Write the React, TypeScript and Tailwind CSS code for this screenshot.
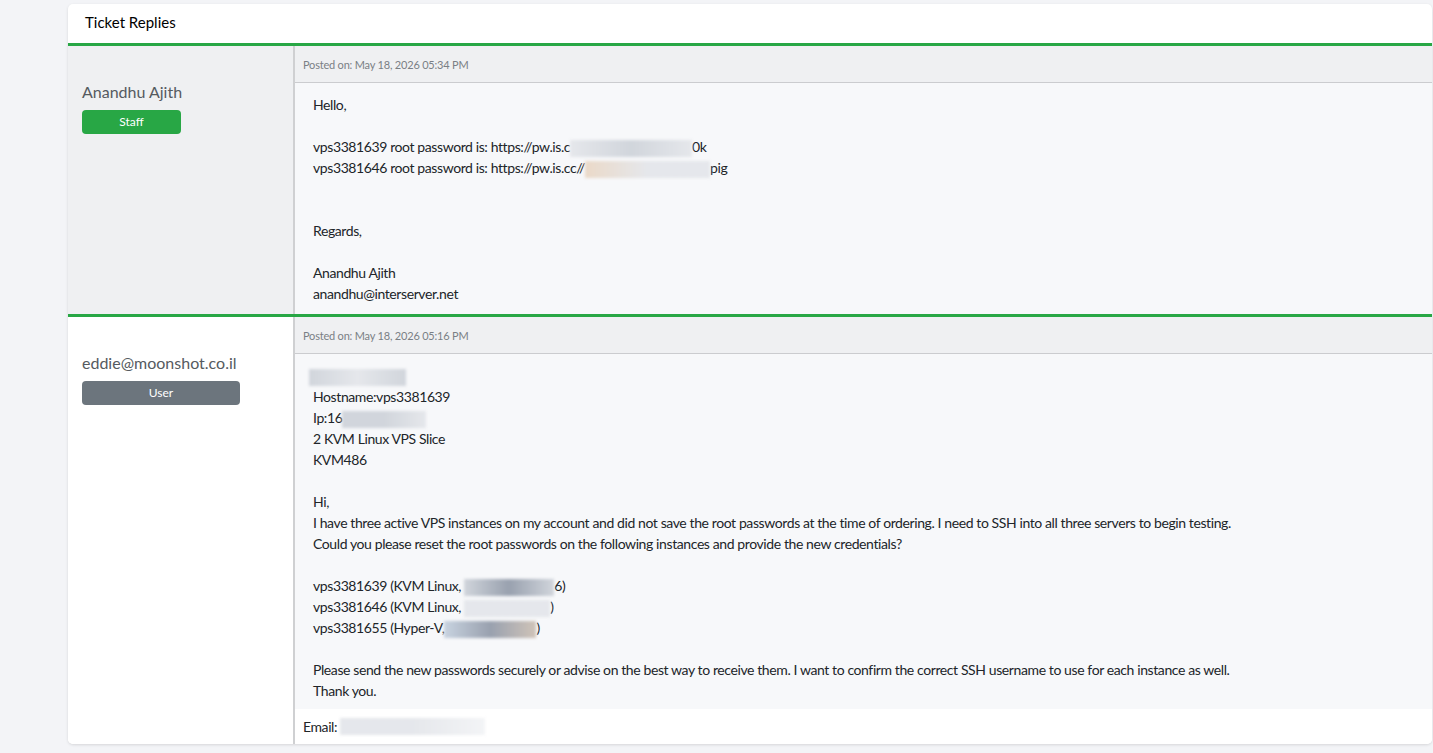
import type { ReactNode } from "react";

const font = { fontFamily: "Lato, 'Noto Sans', sans-serif" };

function Hidden({ w, tint = "" }: { w: number; tint?: string }) {
    // redacted bit of text
    return (
        <span
            className={`inline-block align-middle h-[17px] -my-1 blur-[1.5px] bg-gradient-to-r ${tint || "from-gray-200 via-gray-300 to-gray-200"}`}
            style={{ width: w }}
        />
    );
}

function Badge({ label, tone, width }: { label: string; tone: string; width: string }) {
    return (
        <div className={`mt-[8px] h-[24px] rounded-[4px] flex items-center justify-center text-[12px] text-white ${tone} ${width}`}>
            {label}
        </div>
    );
}

function Reply({
    name,
    badge,
    posted,
    side,
    pad,
    children,
    footer,
}: {
    name: string;
    badge: ReactNode;
    posted: string;
    side: string;
    pad: string;
    children: ReactNode;
    footer?: ReactNode;
}) {
    return (
        <div className="flex border-t-[3px] border-[#28a745]">
            <div className={`w-[225px] shrink-0 pl-[14px] pt-[36px] ${side}`}>
                <div className="text-[16px] leading-5 text-[#555a60]">{name}</div>
                {badge}
            </div>
            <div className="flex-1 border-l-2 border-[#cfd0d2] flex flex-col">
                <div className="h-[37px] bg-[#eff0f2] border-b border-[#cbcccf] pl-[8px] pt-[2px] flex items-center text-[11px] tracking-[-0.2px] text-[#7a7f85]">
                    Posted on: {posted}
                </div>
                <div className={`flex-1 bg-[#f7f8fa] pl-[18px] text-[14px] leading-[21px] tracking-[-0.4px] text-[#212529] ${pad}`}>
                    {children}
                </div>
                {footer}
            </div>
        </div>
    );
}

export default function App() {
    return (
        <div className="min-h-[753px] bg-[#f3f4f7] pt-[4px] pl-[68px] pr-px" style={font}>
            <div className="bg-white rounded-[5px] shadow-[0_1px_3px_rgba(0,0,0,0.12)] overflow-hidden">
                <div className="h-[39px] pl-[17px] pb-[2px] flex items-center text-[15px] text-black">Ticket Replies</div>

                <Reply
                    name="Anandhu Ajith"
                    side="bg-[#eff0f2]"
                    pad="pt-[11px] pb-[10px]"
                    posted="May 18, 2026 05:34 PM"
                    badge={<Badge label="Staff" tone="bg-[#28a745]" width="w-[99px]" />}
                >
                    <p>Hello,</p>
                    <br />
                    <p>vps3381639 root password is: https://pw.is.c<Hidden w={122} />0k</p>
                    <p>
                        vps3381646 root password is: https://pw.is.cc//
                        <Hidden w={125} tint="from-[#ead9c8] via-gray-200 to-gray-200" />
                        pig
                    </p>
                    <br />
                    <br />
                    <p>Regards,</p>
                    <br />
                    <p>Anandhu Ajith</p>
                    <p>anandhu@interserver.net</p>
                </Reply>

                <Reply
                    name="eddie@moonshot.co.il"
                    side="bg-white"
                    pad="pt-[11px] pb-[8px]"
                    posted="May 18, 2026 05:16 PM"
                    badge={<Badge label="User" tone="bg-[#6c757d]" width="w-[158px]" />}
                    footer={
                        <div className="h-[35px] bg-white pl-[8px] flex items-center text-[14px] tracking-[-0.4px] text-[#212529]">
                            Email:&nbsp;<Hidden w={145} tint="from-gray-200 via-gray-200 to-gray-100" />
                        </div>
                    }
                >
                    <p className="-ml-1">
                        <Hidden w={97} tint="from-gray-300 via-gray-200 to-gray-300" />
                    </p>
                    <p>Hostname:vps3381639</p>
                    <p>Ip:16<Hidden w={84} tint="from-gray-300 via-gray-300 to-gray-200" /></p>
                    <p>2 KVM Linux VPS Slice</p>
                    <p>KVM486</p>
                    <br />
                    <p>Hi,</p>
                    <p>
                        I have three active VPS instances on my account and did not save the root passwords at the time of
                        ordering. I need to SSH into all three servers to begin testing.
                    </p>
                    <p>Could you please reset the root passwords on the following instances and provide the new credentials?</p>
                    <br />
                    <p>vps3381639 (KVM Linux, <Hidden w={90} tint="from-gray-300 via-gray-400 to-gray-300" />6)</p>
                    <p>vps3381646 (KVM Linux, <Hidden w={86} tint="from-gray-200 via-gray-200 to-gray-200" />)</p>
                    <p>vps3381655 (Hyper-V,<Hidden w={92} tint="from-[#c8d3e0] via-gray-400 to-[#cfc3b8]" />)</p>
                    <br />
                    <p>
                        Please send the new passwords securely or advise on the best way to receive them. I want to confirm the
                        correct SSH username to use for each instance as well.
                    </p>
                    <p>Thank you.</p>
                </Reply>
            </div>
        </div>
    );
}
